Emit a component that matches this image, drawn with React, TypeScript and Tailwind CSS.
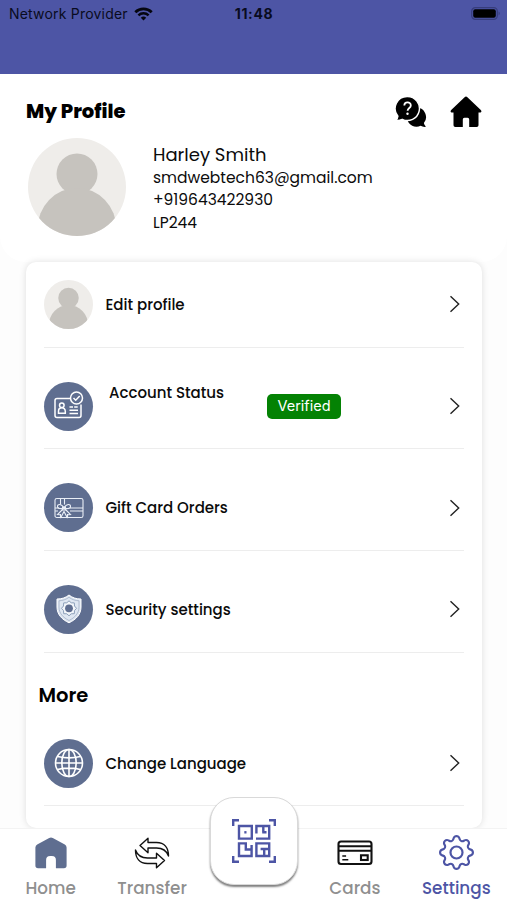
import React from "react";
import clsx from "clsx";
import { BsGear } from "react-icons/bs";

const WifiIcon = () => (
  <svg width="19" height="14" viewBox="0 0 19 14" fill="none" stroke="#05060f">
    <path d="M1.3 5.2a11.8 11.8 0 0 1 16.4 0" strokeWidth="2.8" />
    <path d="M4.4 8.4a7.3 7.3 0 0 1 10.2 0" strokeWidth="2.4" />
    <path d="M9.5 13.4 6.8 10.7a3.9 3.9 0 0 1 5.4 0z" fill="#05060f" stroke="none" />
  </svg>
);

const BatteryIcon = () => (
  <svg width="30" height="13" viewBox="0 0 30 13">
    <rect x="0.7" y="0.7" width="25.6" height="11.6" rx="3.6" fill="none" stroke="#373d7c" strokeWidth="1.2" />
    <rect x="2.2" y="2.2" width="22.6" height="8.6" rx="2" fill="#000" />
    <path d="M27.6 4.6c1.5.5 1.5 3.3 0 3.8z" fill="#373d7c" />
  </svg>
);

const ChatIcon = () => (
  <svg width="32" height="32" viewBox="0 0 32 32">
    <path d="M22 11.5a9.6 9.6 0 0 1 6.9 15.6c.3 1.3.9 2.5 2.1 3.7-2 .3-3.9-.1-5.4-1A9.6 9.6 0 1 1 22 11.5z" fill="#000" />
    <path
      d="M12.5.5a12 12 0 1 1-5.3 22.8c-1.8.9-4 1.4-6.4 1 1.3-1.3 2-2.6 2.1-4.2A12 12 0 0 1 12.5.5z"
      fill="#000"
      stroke="#fff"
      strokeWidth="1.4"
    />
    <path d="M9.3 9.5c.1-4.3 6.6-4 6.5-.1 0 2.6-3.1 2.5-3.2 5.3" fill="none" stroke="#fff" strokeWidth="1.8" />
    <circle cx="12.5" cy="17.8" r="1.2" fill="#fff" />
  </svg>
);

const HouseIcon = () => (
  <svg width="32" height="32" viewBox="0 0 32 32">
    <path
      d="M14.6 1.3a2 2 0 0 1 2.8 0L30.8 14c1.2 1.2.6 2.6-1 2.6h-1.3v12.6a1.8 1.8 0 0 1-1.8 1.8h-7.5v-7.6a1.6 1.6 0 0 0-1.6-1.6h-3.2a1.6 1.6 0 0 0-1.6 1.6V31H5.3a1.8 1.8 0 0 1-1.8-1.8V16.6H2.2c-1.6 0-2.2-1.4-1-2.6z"
      fill="#000"
    />
  </svg>
);

const Avatar = ({ className }: { className: string }) => (
  <svg viewBox="0 0 98 98" className={clsx("shrink-0 rounded-full", className)}>
    <rect width="98" height="98" fill="#efedea" />
    <circle cx="49" cy="36" r="20.5" fill="#c6c3be" />
    <ellipse cx="49" cy="91" rx="39.5" ry="41" fill="#c6c3be" />
  </svg>
);

const IdCardIcon = () => (
  <svg width="32" height="30" viewBox="0 0 32 30" fill="none" stroke="#fff" strokeWidth="1.5">
    <path d="M17.5 7.5H4a2 2 0 0 0-2 2v15a2 2 0 0 0 2 2h22a2 2 0 0 0 2-2V13.5" />
    <circle cx="23.5" cy="7" r="6" />
    <path d="m20.5 7 2.2 2.2L26.7 5" />
    <circle cx="8.8" cy="14.2" r="2.3" />
    <path d="M5.5 22.2v-2c0-4.6 6.8-4.6 6.8 0v2zM16.5 16H20m1.2 0h3.5M16.5 19.2H25M16.5 22.4H25" />
  </svg>
);

const GiftCardIcon = () => (
  <svg width="30" height="22" viewBox="0 0 30 22" fill="none" stroke="#e9eef6" strokeWidth="1.1">
    <rect x="1" y="1.5" width="28" height="19" rx="1.8" />
    <path d="M6.5 1.5v6M10.5 1.5v6M1 11h4M16 11h13M1 14h3M16 14h13M6.5 17v3.5M13.5 17v3.5" />
    <path d="M10 11.5C8 6.5 3 6.5 3.5 9.8c.3 2 3.5 2 6.5 1.7zM10 11.5c2-5 7-5 6.5-1.7-.3 2-3.5 2-6.5 1.7z" />
    <path d="m9 12-5.5 5.5 2.8.3.7 2.5 3-5.8 3 5.8.7-2.5 2.8-.3L11 12" />
    <path d="M8.5 10h3v3h-3z" />
  </svg>
);

const ShieldIcon = () => (
  <svg width="28" height="30" viewBox="0 0 28 30">
    <path
      d="M14 1c3.5 2.9 7.4 4 12 4v8c0 7.6-5 12.5-12 15.8C7 25.5 2 20.6 2 13V5c4.6 0 8.5-1.1 12-4z"
      fill="#dfe7f2"
      stroke="#fff"
    />
    <path
      d="M14 3.3c3 2.2 6.2 3.3 10 3.5V13c0 6.3-4 10.5-10 13.5C8 23.5 4 19.3 4 13V6.8c3.8-.2 7-1.3 10-3.5z"
      fill="none"
      stroke="#a3b1c7"
      strokeWidth=".8"
    />
    <path
      d="M14 6.8 16.2 8.8 19.3 8.900 19.500 12 21.500 14.300 19.500 16.600 19.300 19.700 16.200 19.800 14 21.800 11.800 19.800 8.700 19.700 8.500 16.600 6.500 14.300 8.500 12 8.700 8.900 11.800 8.800z"
      fill="#f4f7fb"
      stroke="#8da0ba"
    />
    <circle cx="14" cy="14.3" r="3.9" fill="#5f6e90" />
  </svg>
);

const GlobeIcon = () => (
  <svg width="30" height="30" viewBox="0 0 30 30" fill="none" stroke="#fff" strokeWidth="1.6">
    <circle cx="15" cy="15" r="13.5" />
    <ellipse cx="15" cy="15" rx="7.2" ry="13.5" />
    <path d="M15 1.5v27M1.5 15h27M3.5 8.5c6.5 1.6 16.5 1.6 23 0M3.5 21.5c6.5-1.6 16.5-1.6 23 0" />
  </svg>
);

const Chevron = () => (
  <svg width="12" height="18" viewBox="0 0 12 18" fill="none" stroke="#222" strokeWidth="1.4" className="mr-[3px] ml-auto shrink-0">
    <path d="m1.5 1.2 8.2 7.8-8.2 7.8" />
  </svg>
);

const HomeTabIcon = () => (
  <svg width="32" height="32" viewBox="0 0 32 32">
    <path
      d="M14.2 1a3.5 3.5 0 0 1 3.6 0l12 6.6a3.5 3.5 0 0 1 1.8 2.900V28.500a2.700 2.700 0 0 1-2.700 2.700h-8V23a4 4 0 0 0-4-4h-1.800a4 4 0 0 0-4 4v8.200H3.100a2.700 2.700 0 0 1-2.700-2.700V10.500a3.500 3.500 0 0 1 1.800-2.900z"
      fill="#5f6e90"
    />
  </svg>
);

const TransferIcon = () => (
  <svg width="36" height="32" viewBox="0 0 36 32" fill="#fff" stroke="#111" strokeWidth="1.4" strokeLinejoin="round">
    <path d="M6 8.5 14 1.2v4.3h8.5c8 0 12 5.5 12 13.5-2-5.5-6-8-12-8H14v4.800z" />
    <path d="M30.5 23.5 22.5 30.8v-4.300H13.500c-8 0-12-5.500-12-13.500 2 5.500 6 8 12 8h9v-4.800z" />
  </svg>
);

const CardsIcon = () => (
  <svg width="36" height="26" viewBox="0 0 36 26" fill="none" stroke="#111" strokeWidth="2.1">
    <rect x="1.5" y="1.5" width="33" height="22.5" rx="2.5" />
    <path d="M1.5 6.2h33M1.5 10.8h33" />
    <path d="M5.3 16h3.8M5.3 19.8h6" strokeWidth="1.6" />
    <rect x="24" y="15.3" width="6.7" height="4.7" />
  </svg>
);

const QrIcon = () => (
  <svg width="44" height="44" viewBox="0 0 44 44" fill="none" stroke="#4d55a5" strokeWidth="2.4">
    <path d="M1.2 7V1.2H7M37 1.2h5.8V7M42.8 37v5.8H37M7 42.8H1.2V37" />
    <path d="M7 7h12.8v12.6H7z" />
    <path d="M12.3 13.3h2.2" />
    <path d="M24.4 14.5V7h12.8v12.6H24M31.3 7v6.3M30.2 13.3h4.3" />
    <path d="M13.8 23.3v7.2h6.9M19.6 26v11H7V24.4h7" />
    <path d="M24.4 24.4h12.8V37H24.4zM28.6 30h8.6M32.2 30v7" />
  </svg>
);

const menuItems = [
  { title: "Edit profile", icon: null },
  { title: "Account Status", icon: <IdCardIcon />, status: "Verified" },
  { title: "Gift Card Orders", icon: <GiftCardIcon /> },
  { title: "Security settings", icon: <ShieldIcon /> },
];

const tabs = [
  { label: "Home", icon: <HomeTabIcon /> },
  { label: "Transfer", icon: <TransferIcon /> },
  { label: "", icon: null },
  { label: "Cards", icon: <CardsIcon /> },
  { label: "Settings", icon: <BsGear size={35} />, active: true },
];

type MenuRowProps = {
  title: string;
  icon: React.ReactNode;
  status?: string;
  className?: string;
};

const MenuRow = ({ title, icon, status, className }: MenuRowProps) => (
  <div className={clsx("flex h-[101.7px] items-center border-b border-[#ededed] pt-4", className)}>
    {icon ? (
      <div className="flex size-[49px] shrink-0 items-center justify-center rounded-full bg-[#5f6e90]">{icon}</div>
    ) : (
      <Avatar className="size-[49px]" />
    )}
    {status ? (
      <>
        <span className="ml-4 w-[158px] pb-[27px] text-[15px] leading-5 font-medium">{title}</span>
        <span className="flex h-[25px] w-[74px] items-center justify-center rounded-[5px] bg-[#048204] font-['Inter',sans-serif] text-[14.5px] text-white">
          {status}
        </span>
      </>
    ) : (
      <span className="ml-[12.5px] pt-px text-[15px] leading-5 font-medium">{title}</span>
    )}
    <Chevron />
  </div>
);

const App = () => {
  return (
    <div className="flex h-[900px] w-[507px] flex-col overflow-hidden bg-[#fdfdfd] font-['Poppins','Inter',sans-serif] text-[#0b0b0b]">
      {/* Status bar */}
      <div className="h-[74px] shrink-0 bg-[#4d55a5]">
        <div className="grid h-[27px] grid-cols-3 items-center pr-[6px] pl-[9px] font-['Inter',sans-serif] text-[14px] text-[#090b20]">
          <div className="flex items-center gap-1.5 whitespace-nowrap">
            <span className="tracking-[0.2px]">Network Provider</span>
            <WifiIcon />
          </div>
          <span className="pr-[2px] text-center font-bold tracking-[0.6px]">11:48</span>
          <div className="flex justify-end">
            <BatteryIcon />
          </div>
        </div>
      </div>

      {/* Profile header */}
      <header className="h-[188px] shrink-0 rounded-b-[26px] bg-white pr-[25px] pl-[26px]">
        <div className="flex h-16 items-center gap-[23px] pt-3">
          <h1 className="mr-auto text-[19.5px] font-extrabold text-black">My Profile</h1>
          <ChatIcon />
          <HouseIcon />
        </div>
        <div className="flex pl-0.5">
          <Avatar className="size-[98px]" />
          <div className="ml-[27px] flex flex-col pt-[5px] text-[15.5px] leading-[22.3px]">
            <span className="text-[18px] leading-6">Harley Smith</span>
            <span>smdwebtech63@gmail.com</span>
            <span>+919643422930</span>
            <span>LP244</span>
          </div>
        </div>
      </header>

      {/* Settings list */}
      <main className="mx-[26px] h-[566px] w-[456px] shrink-0 rounded-[10px] bg-white px-[18px] shadow-[0_0_7px_rgba(0,0,0,0.13)]">
        {menuItems.map((item, index) => (
          <MenuRow key={item.title} {...item} className={index === 0 ? "-mt-4" : ""} />
        ))}
        <h2 className="-ml-[5.5px] h-[52px] pt-[30.5px] text-[19.5px] leading-[26px] font-semibold text-black">More</h2>
        <MenuRow title="Change Language" icon={<GlobeIcon />} />
      </main>

      {/* Bottom tabs */}
      <nav className="relative grid h-[72px] shrink-0 grid-cols-5 border-t border-[#f3f3f3] bg-white">
        {tabs.map((tab, index) => (
          <div key={index} className={clsx("flex flex-col items-center", tab.active ? "text-[#4d55a5]" : "text-[#8f8f8f]")}>
            <div className="flex h-[47px] items-center">{tab.icon}</div>
            <span className="text-[16.8px] leading-6 font-medium">{tab.label}</span>
          </div>
        ))}
        <button className="absolute -top-8 left-[210px] flex size-[88px] items-center justify-center rounded-[24px] border border-[#d9d9d9] bg-white shadow-[0_2px_2px_rgba(0,0,0,0.5)]">
          <QrIcon />
        </button>
      </nav>
    </div>
  );
};

export default App;
